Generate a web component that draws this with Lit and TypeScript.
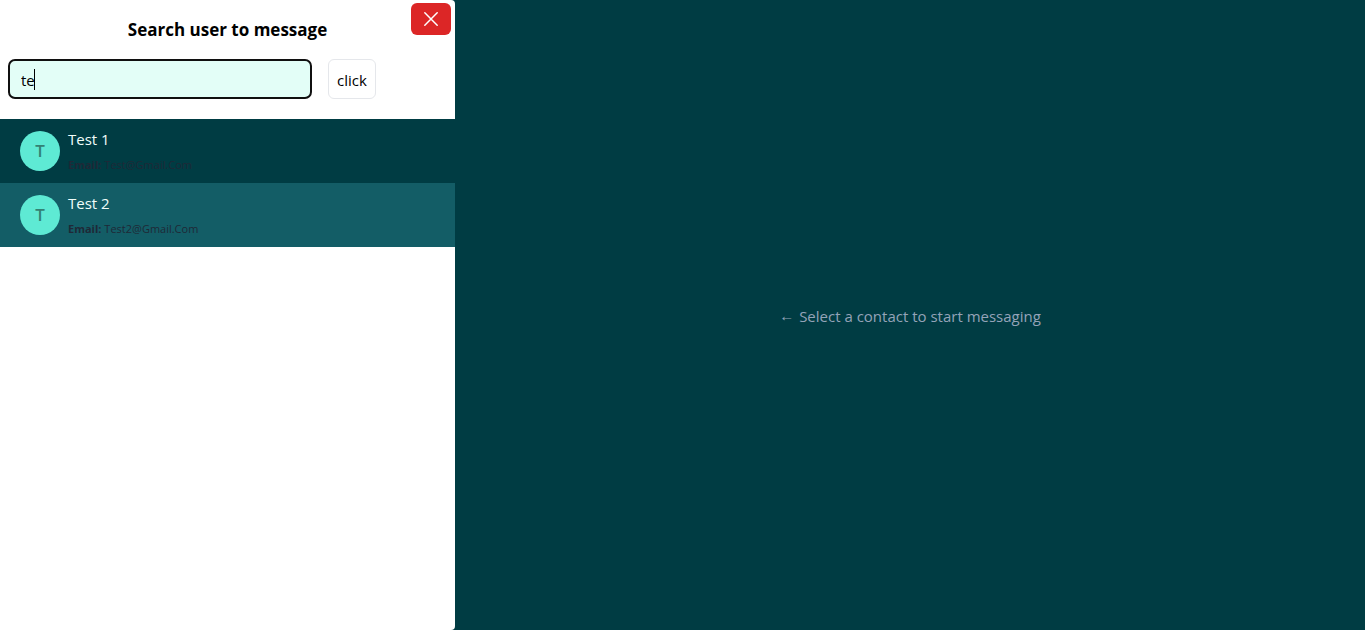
import { LitElement, html, css } from "lit";
import { customElement, state, query } from "lit/decorators.js";
import { classMap } from "lit/directives/class-map.js";

interface Contact {
  name: string;
  email: string;
}

@customElement("app-root")
export class AppRoot extends LitElement {
  static styles = css`
    :host {
      display: flex;
      min-height: 100vh;
      background: #003c43;
      color: #000;
      font: 400 15px/24px "Segoe UI", "Open Sans", "Noto Sans", sans-serif;
    }
    * {
      box-sizing: border-box;
    }
    .panel {
      position: relative;
      flex: 1;
      min-width: 0;
      background: #fff;
      border-radius: 0 4px 4px 0;
    }
    .close {
      position: absolute;
      top: 3px;
      right: 4px;
      display: flex;
      align-items: center;
      justify-content: center;
      width: 40px;
      height: 32px;
      padding: 0;
      border: 0;
      border-radius: 6px;
      background: #dc2626;
      color: #fff;
      cursor: pointer;
    }
    .title {
      margin: 0;
      padding: 16px 0;
      font-size: 17px;
      line-height: 27px;
      font-weight: 700;
      text-align: center;
    }
    .search {
      display: flex;
      gap: 16px;
      padding: 0 8px 20px;
    }
    .field {
      position: relative;
      flex: 0 1 304px;
      min-width: 0;
    }
    .input {
      width: 100%;
      height: 40px;
      padding: 2px 11px 0;
      border: 2px solid #101010;
      border-radius: 7px;
      outline: 0;
      background: #e3fef7;
      color: #000;
      font: inherit;
      caret-color: transparent;
    }
    .caret {
      position: absolute;
      top: 10px;
      left: 12px;
      height: 21px;
      border-right: 1px solid #000;
      pointer-events: none;
    }
    .caret-text {
      visibility: hidden;
    }
    .submit {
      flex: none;
      width: 48px;
      height: 40px;
      padding: 2px 0 0;
      border: 1px solid #e5e7eb;
      border-radius: 6px;
      background: #fff;
      color: #000;
      font: inherit;
      cursor: pointer;
    }
    .list {
      margin: 0;
      padding: 0;
      list-style: none;
    }
    .contact {
      display: flex;
      align-items: center;
      gap: 8px;
      width: 100%;
      height: 64px;
      padding: 0 20px;
      border: 0;
      background: #003c43;
      font: inherit;
      text-align: left;
      cursor: pointer;
    }
    .contact.active {
      background: #135d66;
    }
    .avatar {
      display: grid;
      place-items: center;
      flex: none;
      width: 40px;
      height: 40px;
      border-radius: 50%;
      background: #5eead4;
      color: #338274;
      font-size: 17px;
      font-weight: 600;
    }
    .info {
      display: flex;
      flex-direction: column;
      gap: 6px;
      padding-bottom: 2px;
    }
    .name {
      color: #f0fdfa;
      line-height: 24px;
      font-weight: 500;
    }
    .email {
      color: #1f2937;
      font-size: 11px;
      line-height: 16px;
    }
    .email b {
      font-weight: 700;
    }
    .chat {
      flex: 2;
      min-width: 0;
      display: flex;
      align-items: center;
      justify-content: center;
      gap: 5px;
      padding-top: 2px;
      color: #94a3b8;
    }
    .arrow {
      font-family: "Liberation Sans", sans-serif;
    }
  `;

  @state() private term = "te";
  @state() private active = 1;
  @query(".input") private input!: HTMLInputElement;

  private contacts: Contact[] = [
    { name: "Test 1", email: "Test@Gmail.Com" },
    { name: "Test 2", email: "Test2@Gmail.Com" },
  ];

  firstUpdated() {
    this.input.focus();
  }

  render() {
    return html`
      <aside class="panel">
        <button class="close" type="button" aria-label="Close">
          <svg width="16" height="16" viewBox="0 0 16 16" fill="none" stroke="currentColor" stroke-width="1.5" stroke-linecap="round" aria-hidden="true">
            <path d="M1.8 1.8 14.2 14.2M14.2 1.8 1.8 14.2" />
          </svg>
        </button>
        <h1 class="title">Search user to message</h1>
        <form class="search" @submit=${(e: Event) => e.preventDefault()}>
          <div class="field">
            <input
              class="input"
              type="text"
              aria-label="Search user"
              autocomplete="off"
              spellcheck="false"
              .value=${this.term}
              @input=${(e: Event) => (this.term = (e.target as HTMLInputElement).value)}
            />
            <span class="caret" aria-hidden="true"><span class="caret-text">${this.term}</span></span>
          </div>
          <button class="submit" type="submit">click</button>
        </form>
        <ul class="list">
          ${this.contacts.map(
            (c, i) => html`<li>
              <button
                type="button"
                class=${classMap({ contact: true, active: i === this.active })}
                @mouseenter=${() => (this.active = i)}
              >
                <span class="avatar">${c.name[0]}</span>
                <span class="info">
                  <span class="name">${c.name}</span>
                  <span class="email"><b>Email:</b> ${c.email}</span>
                </span>
              </button>
            </li>`
          )}
        </ul>
      </aside>
      <main class="chat"><span class="arrow">←</span><span>Select a contact to start messaging</span></main>
    `;
  }
}
